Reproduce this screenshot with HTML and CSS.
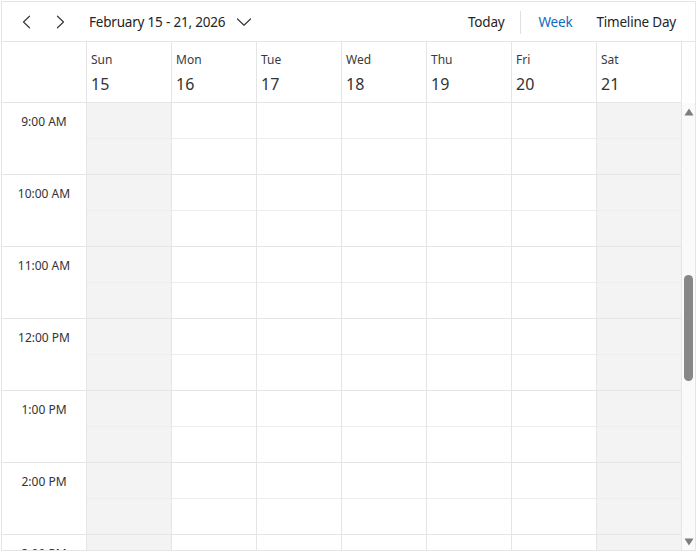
FILE: index.html
```html
<!DOCTYPE html>
<html>
<head>
<meta charset="utf-8">
<link rel="stylesheet" href="styles.css">
</head>
<body>
<div class="scheduler">
  <div class="toolbar">
    <div class="nav">
      <span class="icon-btn"><svg width="16" height="16" viewBox="0 0 16 16"><polyline points="10.5,2.2 4.5,8 10.5,13.8" fill="none" stroke="#3a3a3a" stroke-width="1.2" stroke-linecap="round" stroke-linejoin="round"/></svg></span>
      <span class="icon-btn"><svg width="16" height="16" viewBox="0 0 16 16"><polyline points="5.5,2.2 11.5,8 5.5,13.8" fill="none" stroke="#3a3a3a" stroke-width="1.2" stroke-linecap="round" stroke-linejoin="round"/></svg></span>
      <span class="date-btn">February 15 - 21, 2026<svg class="caret" width="16" height="16" viewBox="0 0 16 16"><polyline points="1.5,5 8,11.2 14.5,5" fill="none" stroke="#3a3a3a" stroke-width="1.2" stroke-linecap="round" stroke-linejoin="round"/></svg></span>
    </div>
    <div class="views">
      <span class="tb-btn today">Today</span>
      <span class="sep"></span>
      <span class="tb-btn active">Week</span>
      <span class="tb-btn">Timeline Day</span>
    </div>
  </div>
  <div class="header-row">
    <div class="corner"></div>
    <div class="day-head"><div class="dname">Sun</div><div class="dnum">15</div></div>
    <div class="day-head"><div class="dname">Mon</div><div class="dnum">16</div></div>
    <div class="day-head"><div class="dname">Tue</div><div class="dnum">17</div></div>
    <div class="day-head"><div class="dname">Wed</div><div class="dnum">18</div></div>
    <div class="day-head"><div class="dname">Thu</div><div class="dnum">19</div></div>
    <div class="day-head"><div class="dname">Fri</div><div class="dnum">20</div></div>
    <div class="day-head"><div class="dname">Sat</div><div class="dnum">21</div></div>
    <div class="head-spacer"></div>
  </div>
  <div class="main">
    <div class="grid">
      <div class="time-col">
        <div class="time-cell">9:00 AM</div>
        <div class="time-cell">10:00 AM</div>
        <div class="time-cell">11:00 AM</div>
        <div class="time-cell">12:00 PM</div>
        <div class="time-cell">1:00 PM</div>
        <div class="time-cell">2:00 PM</div>
        <div class="time-cell">3:00 PM</div>
      </div>
      <div class="day-col weekend">
        <div class="slot"></div><div class="slot hr"></div><div class="slot"></div><div class="slot hr"></div><div class="slot"></div><div class="slot hr"></div><div class="slot"></div><div class="slot hr"></div><div class="slot"></div><div class="slot hr"></div><div class="slot"></div><div class="slot hr"></div><div class="slot"></div><div class="slot hr"></div>
      </div>
      <div class="day-col">
        <div class="slot"></div><div class="slot hr"></div><div class="slot"></div><div class="slot hr"></div><div class="slot"></div><div class="slot hr"></div><div class="slot"></div><div class="slot hr"></div><div class="slot"></div><div class="slot hr"></div><div class="slot"></div><div class="slot hr"></div><div class="slot"></div><div class="slot hr"></div>
      </div>
      <div class="day-col">
        <div class="slot"></div><div class="slot hr"></div><div class="slot"></div><div class="slot hr"></div><div class="slot"></div><div class="slot hr"></div><div class="slot"></div><div class="slot hr"></div><div class="slot"></div><div class="slot hr"></div><div class="slot"></div><div class="slot hr"></div><div class="slot"></div><div class="slot hr"></div>
      </div>
      <div class="day-col">
        <div class="slot"></div><div class="slot hr"></div><div class="slot"></div><div class="slot hr"></div><div class="slot"></div><div class="slot hr"></div><div class="slot"></div><div class="slot hr"></div><div class="slot"></div><div class="slot hr"></div><div class="slot"></div><div class="slot hr"></div><div class="slot"></div><div class="slot hr"></div>
      </div>
      <div class="day-col">
        <div class="slot"></div><div class="slot hr"></div><div class="slot"></div><div class="slot hr"></div><div class="slot"></div><div class="slot hr"></div><div class="slot"></div><div class="slot hr"></div><div class="slot"></div><div class="slot hr"></div><div class="slot"></div><div class="slot hr"></div><div class="slot"></div><div class="slot hr"></div>
      </div>
      <div class="day-col">
        <div class="slot"></div><div class="slot hr"></div><div class="slot"></div><div class="slot hr"></div><div class="slot"></div><div class="slot hr"></div><div class="slot"></div><div class="slot hr"></div><div class="slot"></div><div class="slot hr"></div><div class="slot"></div><div class="slot hr"></div><div class="slot"></div><div class="slot hr"></div>
      </div>
      <div class="day-col weekend">
        <div class="slot"></div><div class="slot hr"></div><div class="slot"></div><div class="slot hr"></div><div class="slot"></div><div class="slot hr"></div><div class="slot"></div><div class="slot hr"></div><div class="slot"></div><div class="slot hr"></div><div class="slot"></div><div class="slot hr"></div><div class="slot"></div><div class="slot hr"></div>
      </div>
    </div>
    <div class="scrollbar">
      <svg class="arrow" width="10" height="8" viewBox="0 0 10 8"><polygon points="5,0.5 9.5,7.5 0.5,7.5" fill="#7d7d7d"/></svg>
      <div class="thumb"></div>
      <svg class="arrow down" width="10" height="8" viewBox="0 0 10 8"><polygon points="0.5,0.5 9.5,0.5 5,7.5" fill="#7d7d7d"/></svg>
    </div>
  </div>
</div>
</body>
</html>
```

FILE: styles.css
```css
* { box-sizing: border-box; }
html, body { margin: 0; padding: 0; background: #fff; }
body {
  font-family: "Segoe UI", "Noto Sans", "Open Sans", sans-serif;
  color: #333;
}
.scheduler {
  margin: 1px;
  width: 695px;
  height: 550px;
  border: 1px solid #e5e5e5;
  display: flex;
  flex-direction: column;
  overflow: hidden;
}
.toolbar {
  height: 40px;
  flex: none;
  border-bottom: 1px solid #e5e5e5;
  display: flex;
  align-items: center;
  justify-content: space-between;
  padding: 1px 7px 0 9px;
  font-size: 13.5px;
  letter-spacing: -0.2px;
  color: #242424;
}
.nav { display: flex; align-items: center; }
.icon-btn {
  width: 32px;
  height: 32px;
  display: flex;
  align-items: center;
  justify-content: center;
}
.icon-btn + .icon-btn { margin-left: 1px; }
.date-btn {
  margin-left: 13px;
  display: flex;
  align-items: center;
  white-space: nowrap;
}
.caret { margin-left: 11px; }
.views { display: flex; align-items: center; }
.tb-btn {
  padding: 0 12px;
  line-height: 32px;
  white-space: nowrap;
}
.tb-btn.today { padding-right: 16px; }
.tb-btn.active { color: #0f6cbd; padding-left: 17px; }
.sep {
  width: 1px;
  height: 23px;
  background: #e0e0e0;
}
.header-row {
  height: 61px;
  flex: none;
  display: flex;
}
.corner {
  width: 85px;
  border-right: 1px solid #e5e5e5;
  border-bottom: 1px solid #e5e5e5;
}
.day-head {
  width: 85px;
  border-right: 1px solid #e5e5e5;
  border-bottom: 1px solid #e5e5e5;
  padding: 9px 0 0 4px;
}
.dname {
  font-size: 12px;
  line-height: 17px;
  color: #3a3a3a;
}
.dnum {
  font-size: 16px;
  line-height: 22px;
  margin-top: 5px;
  color: #333;
}
.head-spacer { flex: 1; }
.main {
  flex: 1;
  display: flex;
  min-height: 0;
}
.grid {
  display: flex;
  width: 680px;
  overflow: hidden;
  align-items: flex-start;
}
.time-col {
  width: 85px;
  flex: none;
  border-right: 1px solid #e5e5e5;
}
.time-cell {
  height: 72px;
  border-bottom: 1px solid #e5e5e5;
  text-align: center;
  font-size: 12px;
  line-height: 16px;
  padding-top: 11px;
  color: #333;
}
.day-col {
  width: 85px;
  flex: none;
  border-right: 1px solid #e5e5e5;
}
.day-col.weekend { background: #f3f3f3; }
.slot {
  height: 36px;
  border-bottom: 1px solid #ededed;
}
.slot.hr { border-bottom-color: #e5e5e5; }
.scrollbar {
  width: 13px;
  flex: none;
  background: #fafafa;
  display: flex;
  flex-direction: column;
  align-items: center;
  padding: 5px 0 4px;
}
.arrow { display: block; flex: none; }
.thumb {
  width: 9px;
  height: 106px;
  margin-top: 159px;
  border-radius: 5px;
  background: #878787;
}
.arrow.down { margin-top: auto; }
```
